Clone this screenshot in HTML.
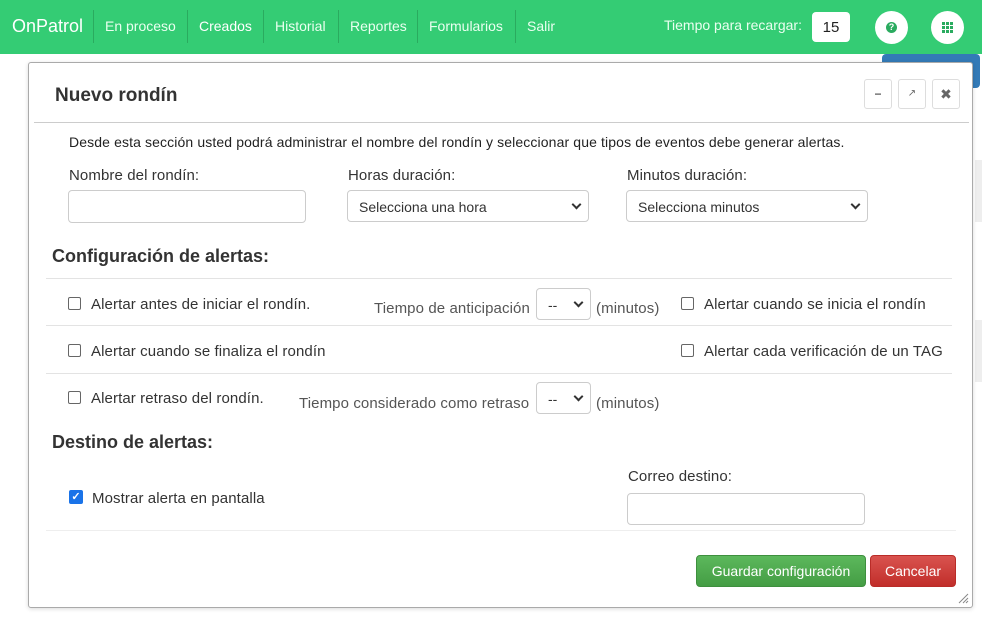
<!DOCTYPE html>
<html><head><meta charset="utf-8"><style>
*{box-sizing:border-box;margin:0;padding:0}
body{width:982px;height:621px;overflow:hidden;background:#fff;font-family:"Liberation Sans",sans-serif;position:relative;color:#333}
.a{position:absolute;white-space:nowrap}
.nav{position:absolute;left:0;top:0;width:982px;height:54px;background:#34cc74}
.nav .i{position:absolute;height:33px;color:#eafff0;font-size:14px;border-left:1px solid #2aab5f;padding-left:11px;top:10px;line-height:33px}
.cb{width:13px;height:13px;border:1px solid #666;border-radius:2px;position:absolute;background:#fff}
.sel{position:absolute;height:32px;border:1px solid #ccc;border-radius:4px;background:#fff;font-size:14px;line-height:32px;padding-left:11px;color:#333}
.sel:after{content:"";position:absolute;right:8px;top:10px;width:5px;height:5px;border-right:2px solid #333;border-bottom:2px solid #333;transform:rotate(45deg)}
.inp{position:absolute;height:33px;border:1px solid #ccc;border-radius:4px;background:#fff}
.hr{position:absolute;height:1px;background:#e3e3e3}
.t{font-size:14px;color:#222;letter-spacing:0.12px}
.l{font-size:15px;color:#333;letter-spacing:0.1px}
.btn{position:absolute;width:28px;height:30px;border:1px solid #ddd;border-radius:3px;background:#fff;text-align:center;line-height:28px;color:#666;font-size:12px}
</style></head><body>
<div class="a" style="left:975px;top:160px;width:7px;height:62px;background:#eee"></div>
<div class="a" style="left:975px;top:320px;width:7px;height:62px;background:#eee"></div>
<div class="a" style="left:882px;top:54px;width:98px;height:34px;background:#337ab7;border-radius:4px"></div>
<div class="nav">
<div class="a" style="left:12px;top:16px;color:#fff;font-size:18px">OnPatrol</div>
<div class="i" style="left:93px">En proceso</div>
<div class="i" style="left:187px;color:#fff">Creados</div>
<div class="i" style="left:263px">Historial</div>
<div class="i" style="left:338px">Reportes</div>
<div class="i" style="left:417px">Formularios</div>
<div class="i" style="left:515px">Salir</div>
<div class="a" style="left:664px;top:17px;color:#eafff0;font-size:14px">Tiempo para recargar:</div>
<div class="a" style="left:812px;top:12px;width:38px;height:30px;background:#fff;border-radius:4px;text-align:center;line-height:32px;font-size:15px;color:#222">15</div>
<div class="a" style="left:875px;top:11px;width:33px;height:33px;background:#fff;border-radius:50%"><div style="position:absolute;left:11px;top:11px;width:11px;height:11px;border-radius:50%;background:#2aab5f;color:#fff;font-size:9px;font-weight:bold;text-align:center;line-height:11px">?</div></div>
<div class="a" style="left:931px;top:11px;width:33px;height:33px;background:#fff;border-radius:50%"><svg style="position:absolute;left:11px;top:11px" width="11" height="11"><g fill="#2aab5f"><rect x="0" y="0" width="3" height="3"/><rect x="4" y="0" width="3" height="3"/><rect x="8" y="0" width="3" height="3"/><rect x="0" y="4" width="3" height="3"/><rect x="4" y="4" width="3" height="3"/><rect x="8" y="4" width="3" height="3"/><rect x="0" y="8" width="3" height="3"/><rect x="4" y="8" width="3" height="3"/><rect x="8" y="8" width="3" height="3"/></g></svg></div>
</div>
<div class="a" style="left:28px;top:62px;width:945px;height:546px;border:1px solid #aaa;border-radius:3px;background:#fff;box-shadow:0 1px 4px rgba(0,0,0,.15)">
</div>
<div class="a" style="left:55px;top:85px;font-size:19px;font-weight:bold;color:#333">Nuevo rondín</div>
<div class="btn" style="left:864px;top:79px;font-weight:bold">−</div>
<div class="btn" style="left:898px;top:79px;font-size:10px">↗</div>
<div class="btn" style="left:932px;top:79px;font-size:14px">✖</div>
<div class="hr" style="left:34px;top:122px;width:935px;background:#ccc"></div>
<div class="a t" style="left:69px;top:134px">Desde esta sección usted podrá administrar el nombre del rondín y seleccionar que tipos de eventos debe generar alertas.</div>
<div class="a l" style="left:69px;top:167px">Nombre del rondín:</div>
<div class="a l" style="left:348px;top:167px">Horas duración:</div>
<div class="a l" style="left:627px;top:167px">Minutos duración:</div>
<div class="inp" style="left:68px;top:190px;width:238px"></div>
<div class="sel" style="left:347px;top:190px;width:242px">Selecciona una hora</div>
<div class="sel" style="left:626px;top:190px;width:242px">Selecciona minutos</div>
<div class="a" style="left:52px;top:246px;font-size:18px;font-weight:bold;color:#333">Configuración de alertas:</div>
<div class="hr" style="left:46px;top:278px;width:906px"></div>
<div class="cb" style="left:68px;top:297px"></div><div class="a l" style="left:91px;top:296px">Alertar antes de iniciar el rondín.</div>
<div class="a l" style="left:374px;top:300px;color:#555">Tiempo de anticipación</div>
<div class="sel" style="left:536px;top:288px;width:55px">--</div>
<div class="a l" style="left:596px;top:300px;color:#555">(minutos)</div>
<div class="cb" style="left:681px;top:297px"></div><div class="a l" style="left:704px;top:296px">Alertar cuando se inicia el rondín</div>
<div class="hr" style="left:46px;top:325px;width:906px"></div>
<div class="cb" style="left:68px;top:344px"></div><div class="a l" style="left:91px;top:343px">Alertar cuando se finaliza el rondín</div>
<div class="cb" style="left:681px;top:344px"></div><div class="a l" style="left:704px;top:343px">Alertar cada verificación de un TAG</div>
<div class="hr" style="left:46px;top:373px;width:906px"></div>
<div class="cb" style="left:68px;top:391px"></div><div class="a l" style="left:91px;top:390px">Alertar retraso del rondín.</div>
<div class="a l" style="left:299px;top:395px;color:#555">Tiempo considerado como retraso</div>
<div class="sel" style="left:536px;top:382px;width:55px">--</div>
<div class="a l" style="left:596px;top:395px;color:#555">(minutos)</div>
<div class="a" style="left:52px;top:432px;font-size:18px;font-weight:bold;color:#333">Destino de alertas:</div>
<div class="a" style="left:69px;top:490px;width:14px;height:14px;background:#1a73e8;border-radius:2px;color:#fff;font-size:11px;text-align:center;line-height:14px;font-weight:bold">✓</div>
<div class="a l" style="left:92px;top:490px">Mostrar alerta en pantalla</div>
<div class="a l" style="left:628px;top:468px">Correo destino:</div>
<div class="inp" style="left:627px;top:493px;width:238px;height:32px"></div>
<div class="hr" style="left:46px;top:530px;width:910px;background:#eee"></div>
<div class="a" style="left:696px;top:555px;width:170px;height:32px;background:linear-gradient(#5cb85c,#449d44);border:1px solid #3e8f3e;border-radius:4px;color:#fff;font-size:14px;text-align:center;line-height:31px">Guardar configuración</div>
<div class="a" style="left:870px;top:555px;width:86px;height:32px;background:linear-gradient(#d9534f,#c12e2a);border:1px solid #b92c28;border-radius:4px;color:#fff;font-size:14px;text-align:center;line-height:31px">Cancelar</div>
<svg class="a" style="left:957px;top:592px" width="12" height="12"><path d="M11 2L2 11M11 6L6 11M11 9L9 11" stroke="#888" stroke-width="1"/></svg>
</body></html>
